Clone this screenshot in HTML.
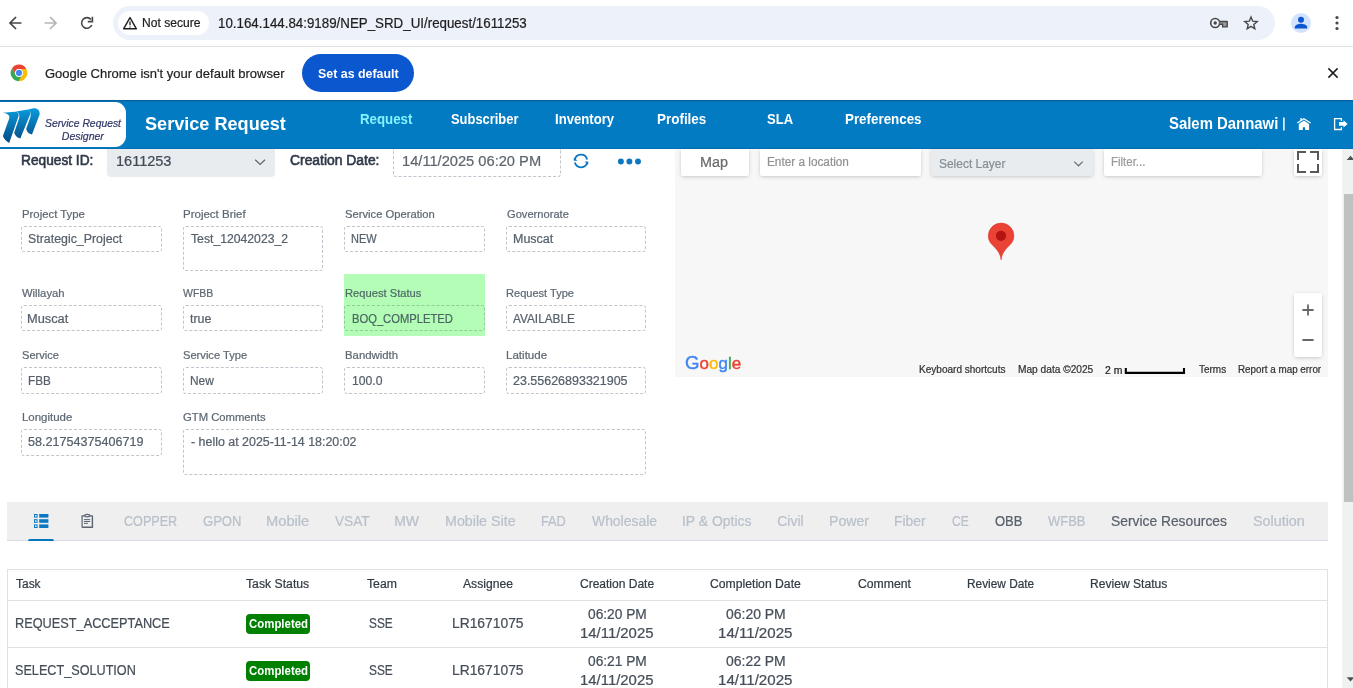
<!DOCTYPE html>
<html><head><meta charset="utf-8"><title>Service Request</title>
<style>
*{box-sizing:border-box;margin:0;padding:0}
html,body{width:1353px;height:688px;overflow:hidden;background:#fff;font-family:"Liberation Sans",sans-serif;color:#495057}
.a{position:absolute;white-space:pre;line-height:1;transform-origin:0 0}
svg{position:absolute;overflow:visible}
#sep1{left:0;top:46px;width:1353px;height:1px;background:#e0e3e1}
#pill{left:113px;top:6px;width:1162px;height:34px;border-radius:17px;background:#edf1fa}
#chip{left:118px;top:11px;width:91px;height:24px;border-radius:12px;background:#fff}
#sep2{left:0;top:99px;width:1353px;height:1px;background:#fcf9f6}
#setdef{left:302px;top:54px;width:112px;height:38px;border-radius:19px;background:#0b57d0}
#hdr{left:0;top:100px;width:1353px;height:49px;background:#027bc2;border-bottom:1px solid #026fb4;box-shadow:inset 0 1px 0 #0261a5,inset 0 2px 0 #0a71b1}
#logo{left:-12px;top:102px;width:138px;height:45px;background:#fff;border-radius:11px}
#reqsel{left:107px;top:149px;width:168px;height:28px;background:#e9ecef;border-radius:0 0 4px 4px}
.f{position:absolute;border:1px dashed #bfc5cd;border-radius:3px;width:141px;height:26px}
#green{left:344px;top:274px;width:141px;height:62px;background:#b3fdb7}
#map{left:675px;top:149px;width:653px;height:228px;background:#f7f7f7}
.mb{position:absolute;background:#fff;border-radius:0 0 2px 2px;box-shadow:0 1px 4px -1px rgba(0,0,0,.3)}
#sellayer{left:931px;top:149px;width:162px;height:27px;background:#e9ecef;border-radius:0 0 3px 3px;box-shadow:0 1px 4px -1px rgba(0,0,0,.3)}
#zoomc{left:1294px;top:293px;width:28px;height:64px;border-radius:2px}
#tabbar{left:7px;top:502px;width:1321px;height:39px;background:#efefef;border-bottom:1px solid #d6dde6}
#tabind{left:28px;top:539px;width:26px;height:2px;background:#0277bd;border-radius:2px 2px 0 0}
#tbl{left:7px;top:569px;width:1321px;height:130px;border:1px solid #dee2e6;border-bottom:0}
.hl{position:absolute;left:8px;width:1319px;height:1px;background:#dee2e6}
.badge{position:absolute;left:246px;width:64px;height:20px;border-radius:4px;background:#008000}
#sbtrack{left:1342px;top:149px;width:17px;height:539px;background:#f1f1f1}
#sbthumb{left:1344px;top:194px;width:13px;height:308px;background:#c1c1c1}
</style></head><body>
<!-- browser chrome -->
<div class="a" id="pill"></div>
<div class="a" id="chip"></div>
<div class="a" id="sep1"></div>
<svg style="left:0;top:0" width="1353" height="100" viewBox="0 0 1353 100">
 <!-- back -->
 <g fill="none" stroke="#474747" stroke-width="1.7" stroke-linecap="square" stroke-linejoin="miter">
  <path d="M20.6 23H10.6M15.4 17.6L10 23l5.4 5.4"/>
 </g>
 <!-- forward -->
 <g fill="none" stroke="#b5b5b5" stroke-width="1.7" stroke-linecap="square">
  <path d="M45.4 23H55.4M50.6 17.6L56 23l-5.4 5.4"/>
 </g>
 <!-- reload -->
 <g fill="none" stroke="#474747" stroke-width="1.6">
  <path d="M91 19.6A5.3 5.3 0 1 0 91.8 25"/>
  <path d="M92.4 16.8v4.8h-4.6" stroke-linejoin="miter"/>
 </g>
 <!-- warning triangle -->
 <path d="M130 17.6l6.4 11.2h-12.8z" fill="none" stroke="#1f1f1f" stroke-width="1.4" stroke-linejoin="round"/>
 <path d="M130 21.6v3.6M130 26.4v1.2" stroke="#1f1f1f" stroke-width="1.3"/>
 <!-- key -->
 <circle cx="1215.2" cy="23" r="4.5" fill="none" stroke="#474747" stroke-width="1.6"/>
 <path d="M1219.6 21.5h7.6v5.4h-4.6v-2.6h-3.4" fill="#9a9a9a" stroke="#474747" stroke-width="1.4" stroke-linejoin="round"/>
 <circle cx="1215.2" cy="23" r="1.7" fill="#474747"/>
 <!-- star -->
 <path d="M1251.0 17.0L1252.7 21.2L1257.2 21.5L1253.8 24.4L1254.8 28.8L1251.0 26.4L1247.2 28.8L1248.2 24.4L1244.8 21.5L1249.3 21.2z" fill="none" stroke="#474747" stroke-width="1.4" stroke-linejoin="miter"/>
 <!-- avatar -->
 <circle cx="1301" cy="23" r="10" fill="#d3e3fd"/>
 <circle cx="1301" cy="19.8" r="3" fill="#0b57d0"/>
 <path d="M1294.8 28.4v-1.3c0-2.3 4.1-3.4 6.2-3.4s6.2 1.1 6.2 3.4v1.3z" fill="#0b57d0"/>
 <!-- menu dots -->
 <circle cx="1337" cy="17.5" r="1.6" fill="#474747"/><circle cx="1337" cy="23" r="1.6" fill="#474747"/><circle cx="1337" cy="28.5" r="1.6" fill="#474747"/>
 <!-- chrome logo -->
 <g transform="translate(19 72.9)">
  <circle r="8.3" fill="#fff"/>
  <path d="M-3.38 1.95L-7.04 -4.40A8.3 8.3 0 0 1 7.33 -3.90L0.00 -3.90A3.9 3.9 0 0 0 -3.38 1.95z" fill="#ea4335"/>
  <path d="M0.00 -3.90L7.33 -3.90A8.3 8.3 0 0 1 -0.29 8.30L3.38 1.95A3.9 3.9 0 0 0 0.00 -3.90z" fill="#fbbc04"/>
  <path d="M3.38 1.95L-0.29 8.30A8.3 8.3 0 0 1 -7.04 -4.40L-3.38 1.95A3.9 3.9 0 0 0 3.38 1.95z" fill="#34a853"/>
  <circle r="3.9" fill="#fff"/><circle r="3.05" fill="#4285f4"/>
 </g>
 <!-- close x -->
 <path d="M1328.4 68.4l9.2 9.2M1337.6 68.4l-9.2 9.2" stroke="#1f1f1f" stroke-width="1.5"/>
</svg>
<div class="a" id="setdef"></div>
<div class="a" id="sep2"></div>
<!-- app header -->
<div class="a" id="hdr"></div>
<div class="a" id="logo"></div>
<svg style="left:0;top:100px" width="1353" height="49" viewBox="0 100 1353 49">
 <defs><linearGradient id="lg" gradientUnits="userSpaceOnUse" x1="0" y1="108" x2="0" y2="143"><stop offset="0" stop-color="#0a9bdb"/><stop offset="1" stop-color="#044a85"/></linearGradient></defs>
 <g fill="url(#lg)">
  <path d="M2.9 112.7L14.6 111.8C17.6 111.6 19.2 113.2 18.6 116.1L9.2 142.9Q4.6 140.6 2.9 136L9.2 118.4Q10.5 113.8 2.9 112.7z"/>
  <path d="M16 111.6L26.4 109.8C29.4 109.4 30.8 111.4 29.9 115.1L20.3 138.6Q15.7 137.3 14.2 132.7L19.2 118C19.8 114.6 19 112.6 16 111.6z"/>
  <path d="M27.8 109.5L33.6 108.2C37.6 108 40.2 110.6 39.6 114.4L32 134.4Q26.8 133.4 26.2 128.8L30.4 117C31 113 30.4 111 27.8 109.5z"/>
 </g>
 <!-- pipe -->
 <path d="M1283.9 117.4v13" stroke="#fff" stroke-width="1.5"/>
 <!-- home -->
 <path d="M1297.3 123L1303.9 118.7L1310.6 123" fill="none" stroke="#fff" stroke-width="1.1"/>
 <g fill="#fff">
  <path d="M1303.9 120.5L1309.1 123.9V130.1H1305.1V127.2H1302.8V130.1H1298.8V123.9z"/>
  <rect x="1300.4" y="118" width="1.4" height="2.6"/>
 </g>
 <!-- logout -->
 <path d="M1341.4 120.9V118.7H1334.6V129.5H1341.4V127.3" fill="none" stroke="#fff" stroke-width="1.3"/>
 <path d="M1339 122.1H1343.5V120.3L1347.7 124L1343.5 127.6V125.8H1339z" fill="#fff"/>
</svg>
<!-- form -->
<div class="a" id="reqsel"></div>
<svg style="left:0;top:149px" width="680" height="40" viewBox="0 149 680 40">
 <path d="M255.2 159.8l4.9 4.6 4.9-4.6" fill="none" stroke="#5b636b" stroke-width="1.2"/>
 <!-- refresh -->
 <g fill="none" stroke="#0a78c2" stroke-width="1.8">
  <path d="M574.8 159.9A6.3 6.3 0 0 1 587.1 159.4"/>
  <path d="M587.2 162.1A6.3 6.3 0 0 1 574.9 162.6"/>
 </g>
 <path d="M573.8 157.2v3.5h3.6z" fill="#0a78c2"/>
 <path d="M588.2 164.9v-3.5h-3.6z" fill="#0a78c2"/>
 <circle cx="620.9" cy="161.5" r="2.95" fill="#0a78c2"/><circle cx="629.4" cy="161.5" r="2.95" fill="#0a78c2"/><circle cx="638" cy="161.5" r="2.95" fill="#0a78c2"/>
</svg>
<div class="f" style="left:393px;top:149px;width:168px;height:28px;border-top:0;border-radius:0 0 3px 3px"></div>
<div class="a" id="green"></div>
<div class="f" style="left:21px;top:226px"></div><div class="f" style="left:183px;top:226px;width:140px;height:45px"></div><div class="f" style="left:344px;top:226px"></div><div class="f" style="left:506px;top:226px;width:140px"></div>
<div class="f" style="left:21px;top:305px"></div><div class="f" style="left:183px;top:305px;width:140px"></div><div class="f" style="left:344px;top:305px;border-color:#8fce93"></div><div class="f" style="left:506px;top:305px;width:140px"></div>
<div class="f" style="left:21px;top:367px;height:27px"></div><div class="f" style="left:183px;top:367px;width:140px;height:27px"></div><div class="f" style="left:344px;top:367px;height:27px"></div><div class="f" style="left:506px;top:367px;width:140px;height:27px"></div>
<div class="f" style="left:21px;top:429px;height:27px"></div><div class="f" style="left:183px;top:429px;width:463px;height:46px"></div>
<!-- map -->
<div class="a" id="map"></div>
<div class="mb" style="left:681px;top:149px;width:68px;height:27px"></div>
<div class="mb" style="left:760px;top:149px;width:161px;height:27px"></div>
<div class="a" id="sellayer"></div>
<div class="mb" style="left:1104px;top:149px;width:158px;height:27px"></div>
<div class="mb" style="left:1294px;top:149px;width:28px;height:27px"></div>
<div class="mb" id="zoomc"></div>
<svg style="left:675px;top:149px" width="653" height="228" viewBox="675 149 653 228">
 <path d="M1074.2 161.6l4.3 4.2 4.3-4.2" fill="none" stroke="#6a727a" stroke-width="1.2"/>
 <!-- fullscreen -->
 <g fill="none" stroke="#585858" stroke-width="2">
  <path d="M1298 160v-8h8M1310 152h8v8M1318 164v8h-8M1306 172h-8v-8"/>
 </g>
 <!-- zoom +/- -->
 <path d="M1302.4 310h11.2M1308 304.4v11.2M1302.4 340h11.2" stroke="#666" stroke-width="1.8"/>
 <!-- pin -->
 <path d="M1001.1 259.8C1000.4 252.6 996 248.6 992.2 244.8C989.8 242.4 988.3 239.4 988.3 235.9A12.8 12.8 0 0 1 1013.9 235.9C1013.9 239.4 1012.4 242.4 1010 244.8C1006.2 248.6 1001.8 252.6 1001.1 259.8z" fill="#ea4335" stroke="#d8392e" stroke-width=".6"/>
 <circle cx="1001" cy="235.8" r="5.1" fill="#b31412"/>
 <!-- scale bar -->
 <path d="M1125.8 368v4.9h58.2v-4.9" fill="none" stroke="#000" stroke-width="2.1"/>
</svg>
<!-- tabs -->
<div class="a" id="tabbar"></div>
<div class="a" id="tabind"></div>
<svg style="left:0;top:502px" width="140" height="39" viewBox="0 502 140 39">
 <g fill="#0a78c2">
  <rect x="34" y="514" width="3.6" height="3.6"/><rect x="39.2" y="514" width="9.2" height="3.6"/>
  <rect x="34" y="519.2" width="3.6" height="3.6"/><rect x="39.2" y="519.2" width="9.2" height="3.6"/>
  <rect x="34" y="524.4" width="3.6" height="3.6"/><rect x="39.2" y="524.4" width="9.2" height="3.6"/>
 </g>
 <g fill="#efefef"><rect x="35" y="515" width="1.6" height="1.6"/><rect x="35" y="520.2" width="1.6" height="1.6"/><rect x="35" y="525.4" width="1.6" height="1.6"/></g>
 <g fill="none" stroke="#5a6470" stroke-width="1.2">
  <path d="M84.6 515.9h-2.5v11.3h10.2v-11.3h-2.5" />
  <path d="M92.6 516.2v11.3h-10" stroke-width="1"/>
  <ellipse cx="87.2" cy="515.6" rx="2.6" ry="1.3"/>
  <path d="M84 519.6h6.2M84 521.5h6.2M84 523.4h3.9" stroke-width="1"/>
 </g>
</svg>
<!-- table -->
<div class="a" id="tbl"></div>
<div class="hl" style="top:600px"></div><div class="hl" style="top:647px"></div>
<div class="badge" style="top:614px"></div><div class="badge" style="top:661px"></div>
<!-- scrollbar -->
<div class="a" id="sbtrack"></div>
<div class="a" id="sbthumb"></div>
<svg style="left:1342px;top:149px" width="11" height="539" viewBox="1342 149 11 539">
 <path d="M1350.5 155.8l3.8 4.2h-7.6z" fill="#505050"/>
 <path d="M1350.5 681.4l3.8 -4.2h-7.6z" fill="#505050"/>
</svg>
<div id="tx" style="position:absolute;left:0;top:0;width:1353px;height:688px;will-change:transform;-webkit-text-stroke:.22px">
<span class="a" style="left:142.4px;top:17.0px;font-size:12px;color:#1f1f1f;transform:scaleX(1.008)">Not secure</span>
<span class="a" style="left:217.6px;top:16.0px;font-size:14px;color:#1f1f1f;transform:scaleX(0.952)">10.164.144.84:9189/NEP_SRD_UI/request/1611253</span>
<span class="a" style="left:45.3px;top:67.0px;font-size:13.5px;color:#1f1f1f;transform:scaleX(0.963)">Google Chrome isn&#x27;t your default browser</span>
<span class="a" style="left:317.6px;top:67.0px;font-size:13px;color:#ffffff;transform:scaleX(0.954);font-weight:700;-webkit-text-stroke:0">Set as default</span>
<span class="a" style="left:44.7px;top:118.0px;font-size:10.5px;color:#323868;transform:scaleX(0.986);font-style:italic">Service Request</span>
<span class="a" style="left:61.8px;top:131.0px;font-size:10.5px;color:#323868;transform:scaleX(1.000);font-style:italic">Designer</span>
<span class="a" style="left:144.9px;top:114.0px;font-size:19px;color:#ffffff;transform:scaleX(0.953);font-weight:700;-webkit-text-stroke:0">Service Request</span>
<span class="a" style="left:360.0px;top:111.0px;font-size:15px;color:#84f3ff;transform:scaleX(0.884);font-weight:700;-webkit-text-stroke:0">Request</span>
<span class="a" style="left:451.3px;top:111.0px;font-size:15px;color:#fff;transform:scaleX(0.861);font-weight:700;-webkit-text-stroke:0">Subscriber</span>
<span class="a" style="left:554.6px;top:111.0px;font-size:15px;color:#fff;transform:scaleX(0.876);font-weight:700;-webkit-text-stroke:0">Inventory</span>
<span class="a" style="left:657.2px;top:111.0px;font-size:15px;color:#fff;transform:scaleX(0.896);font-weight:700;-webkit-text-stroke:0">Profiles</span>
<span class="a" style="left:767.2px;top:111.0px;font-size:15px;color:#fff;transform:scaleX(0.868);font-weight:700;-webkit-text-stroke:0">SLA</span>
<span class="a" style="left:844.6px;top:111.0px;font-size:15px;color:#fff;transform:scaleX(0.891);font-weight:700;-webkit-text-stroke:0">Preferences</span>
<span class="a" style="left:1168.9px;top:116.0px;font-size:16px;color:#ffffff;transform:scaleX(0.931);font-weight:700;-webkit-text-stroke:0">Salem Dannawi</span>
<span class="a" style="left:21.0px;top:153.0px;font-size:14px;color:#2f3947;transform:scaleX(0.979);-webkit-text-stroke:0.6px">Request ID:</span>
<span class="a" style="left:115.8px;top:154.0px;font-size:14px;color:#414b57;transform:scaleX(1.037)">1611253</span>
<span class="a" style="left:289.8px;top:153.0px;font-size:14px;color:#2f3947;transform:scaleX(0.991);-webkit-text-stroke:0.6px">Creation Date:</span>
<span class="a" style="left:401.6px;top:154.0px;font-size:14px;color:#5f666e;transform:scaleX(1.047)">14/11/2025 06:20 PM</span>
<span class="a" style="left:21.9px;top:209.0px;font-size:11px;color:#5e6873;transform:scaleX(1.032)">Project Type</span>
<span class="a" style="left:183.4px;top:209.0px;font-size:11px;color:#5e6873;transform:scaleX(1.045)">Project Brief</span>
<span class="a" style="left:344.7px;top:209.0px;font-size:11px;color:#5e6873;transform:scaleX(1.019)">Service Operation</span>
<span class="a" style="left:506.5px;top:209.0px;font-size:11px;color:#5e6873;transform:scaleX(1.012)">Governorate</span>
<span class="a" style="left:22.0px;top:288.0px;font-size:11px;color:#5e6873;transform:scaleX(1.023)">Willayah</span>
<span class="a" style="left:183.4px;top:288.0px;font-size:11px;color:#5e6873;transform:scaleX(0.952)">WFBB</span>
<span class="a" style="left:345.2px;top:288.0px;font-size:11px;color:#4f6a66;transform:scaleX(1.015)">Request Status</span>
<span class="a" style="left:506.3px;top:288.0px;font-size:11px;color:#5e6873;transform:scaleX(1.005)">Request Type</span>
<span class="a" style="left:21.8px;top:350.0px;font-size:11px;color:#5e6873;transform:scaleX(1.009)">Service</span>
<span class="a" style="left:183.2px;top:350.0px;font-size:11px;color:#5e6873;transform:scaleX(1.012)">Service Type</span>
<span class="a" style="left:345.2px;top:350.0px;font-size:11px;color:#5e6873;transform:scaleX(1.032)">Bandwidth</span>
<span class="a" style="left:506.3px;top:350.0px;font-size:11px;color:#5e6873;transform:scaleX(1.052)">Latitude</span>
<span class="a" style="left:21.7px;top:412.0px;font-size:11px;color:#5e6873;transform:scaleX(1.041)">Longitude</span>
<span class="a" style="left:183.2px;top:412.0px;font-size:11px;color:#5e6873;transform:scaleX(1.023)">GTM Comments</span>
<span class="a" style="left:28.0px;top:233.0px;font-size:12px;color:#56606b;transform:scaleX(1.031)">Strategic_Project</span>
<span class="a" style="left:191.4px;top:233.0px;font-size:12px;color:#56606b;transform:scaleX(1.017)">Test_12042023_2</span>
<span class="a" style="left:351.4px;top:233.0px;font-size:12px;color:#56606b;transform:scaleX(0.917)">NEW</span>
<span class="a" style="left:513.2px;top:233.0px;font-size:12px;color:#56606b;transform:scaleX(1.040)">Muscat</span>
<span class="a" style="left:27.3px;top:313.0px;font-size:12px;color:#56606b;transform:scaleX(1.067)">Muscat</span>
<span class="a" style="left:190.1px;top:313.0px;font-size:12px;color:#56606b;transform:scaleX(1.037)">true</span>
<span class="a" style="left:351.7px;top:313.0px;font-size:12px;color:#4c6561;transform:scaleX(0.933)">BOQ_COMPLETED</span>
<span class="a" style="left:513.4px;top:313.0px;font-size:12px;color:#56606b;transform:scaleX(0.984)">AVAILABLE</span>
<span class="a" style="left:28.0px;top:375.0px;font-size:12px;color:#56606b;transform:scaleX(0.977)">FBB</span>
<span class="a" style="left:189.8px;top:375.0px;font-size:12px;color:#56606b;transform:scaleX(0.991)">New</span>
<span class="a" style="left:351.7px;top:375.0px;font-size:12px;color:#56606b;transform:scaleX(1.017)">100.0</span>
<span class="a" style="left:513.2px;top:375.0px;font-size:12px;color:#56606b;transform:scaleX(1.040)">23.55626893321905</span>
<span class="a" style="left:28.1px;top:436.0px;font-size:12px;color:#56606b;transform:scaleX(1.049)">58.21754375406719</span>
<span class="a" style="left:191.3px;top:436.0px;font-size:12px;color:#56606b;transform:scaleX(1.035)">- hello at 2025-11-14 18:20:02</span>
<span class="a" style="left:699.8px;top:155.0px;font-size:14px;color:#6a6a6a;transform:scaleX(1.025)">Map</span>
<span class="a" style="left:767.1px;top:156.0px;font-size:12px;color:#929292;transform:scaleX(0.982)">Enter a location</span>
<span class="a" style="left:939.2px;top:157.0px;font-size:13px;color:#868e96;transform:scaleX(0.919)">Select Layer</span>
<span class="a" style="left:1110.6px;top:156.0px;font-size:12px;color:#9a9a9a;transform:scaleX(0.955)">Filter...</span>
<span class="a" style="left:685.3px;top:354.0px;font-size:18px;color:#4285f4;transform:scaleX(1.036)"><span style="-webkit-text-stroke:.45px;text-shadow:0 0 2px #fff,0 0 1px #fff">G<span style="font-size:16.4px"><span style="color:#ea4335">o</span><span style="color:#fbbc05">o</span>g<span style="color:#34a853">l</span><span style="color:#ea4335">e</span></span></span></span>
<span class="a" style="left:919.3px;top:365.0px;font-size:10px;color:#333;transform:scaleX(1.004)">Keyboard shortcuts</span>
<span class="a" style="left:1017.9px;top:365.0px;font-size:10px;color:#333;transform:scaleX(1.016)">Map data ©2025</span>
<span class="a" style="left:1104.9px;top:366.0px;font-size:10px;color:#222;transform:scaleX(1.041)">2 m</span>
<span class="a" style="left:1198.6px;top:365.0px;font-size:10px;color:#333;transform:scaleX(0.997)">Terms</span>
<span class="a" style="left:1238.4px;top:365.0px;font-size:10px;color:#333;transform:scaleX(0.984)">Report a map error</span>
<span class="a" style="left:124.1px;top:514.0px;font-size:14px;color:#b9c0ca;transform:scaleX(0.900)">COPPER</span>
<span class="a" style="left:202.7px;top:514.0px;font-size:14px;color:#b9c0ca;transform:scaleX(0.932)">GPON</span>
<span class="a" style="left:265.8px;top:514.0px;font-size:14px;color:#b9c0ca;transform:scaleX(1.048)">Mobile</span>
<span class="a" style="left:334.5px;top:514.0px;font-size:14px;color:#b9c0ca;transform:scaleX(0.972)">VSAT</span>
<span class="a" style="left:394.2px;top:514.0px;font-size:14px;color:#b9c0ca;transform:scaleX(1.000)">MW</span>
<span class="a" style="left:444.8px;top:514.0px;font-size:14px;color:#b9c0ca;transform:scaleX(1.019)">Mobile Site</span>
<span class="a" style="left:540.6px;top:514.0px;font-size:14px;color:#b9c0ca;transform:scaleX(0.911)">FAD</span>
<span class="a" style="left:591.9px;top:514.0px;font-size:14px;color:#b9c0ca;transform:scaleX(0.994)">Wholesale</span>
<span class="a" style="left:681.7px;top:514.0px;font-size:14px;color:#b9c0ca;transform:scaleX(0.996)">IP &amp; Optics</span>
<span class="a" style="left:777.2px;top:514.0px;font-size:14px;color:#b9c0ca;transform:scaleX(1.000)">Civil</span>
<span class="a" style="left:828.8px;top:514.0px;font-size:14px;color:#b9c0ca;transform:scaleX(1.010)">Power</span>
<span class="a" style="left:894.3px;top:514.0px;font-size:14px;color:#b9c0ca;transform:scaleX(0.988)">Fiber</span>
<span class="a" style="left:952.3px;top:514.0px;font-size:14px;color:#b9c0ca;transform:scaleX(0.857)">CE</span>
<span class="a" style="left:994.9px;top:514.0px;font-size:14px;color:#59616b;transform:scaleX(0.929)">OBB</span>
<span class="a" style="left:1047.9px;top:514.0px;font-size:14px;color:#b9c0ca;transform:scaleX(0.926)">WFBB</span>
<span class="a" style="left:1111.0px;top:514.0px;font-size:14px;color:#59616b;transform:scaleX(0.987)">Service Resources</span>
<span class="a" style="left:1252.8px;top:514.0px;font-size:14px;color:#b9c0ca;transform:scaleX(1.024)">Solution</span>
<span class="a" style="left:15.5px;top:578.0px;font-size:12px;color:#323b45;transform:scaleX(0.997)">Task</span>
<span class="a" style="left:246.2px;top:578.0px;font-size:12px;color:#323b45;transform:scaleX(1.019)">Task Status</span>
<span class="a" style="left:366.8px;top:578.0px;font-size:12px;color:#323b45;transform:scaleX(1.020)">Team</span>
<span class="a" style="left:463.1px;top:578.0px;font-size:12px;color:#323b45;transform:scaleX(1.013)">Assignee</span>
<span class="a" style="left:579.8px;top:578.0px;font-size:12px;color:#323b45;transform:scaleX(1.001)">Creation Date</span>
<span class="a" style="left:710.4px;top:578.0px;font-size:12px;color:#323b45;transform:scaleX(1.016)">Completion Date</span>
<span class="a" style="left:857.7px;top:578.0px;font-size:12px;color:#323b45;transform:scaleX(1.018)">Comment</span>
<span class="a" style="left:967.1px;top:578.0px;font-size:12px;color:#323b45;transform:scaleX(0.988)">Review Date</span>
<span class="a" style="left:1089.8px;top:578.0px;font-size:12px;color:#323b45;transform:scaleX(1.008)">Review Status</span>
<span class="a" style="left:14.5px;top:616.0px;font-size:14px;color:#454e58;transform:scaleX(0.910)">REQUEST_ACCEPTANCE</span>
<span class="a" style="left:248.7px;top:618.0px;font-size:12px;color:#ffffff;transform:scaleX(0.952);font-weight:700;-webkit-text-stroke:0">Completed</span>
<span class="a" style="left:369.2px;top:616.0px;font-size:14px;color:#454e58;transform:scaleX(0.846)">SSE</span>
<span class="a" style="left:452.0px;top:616.0px;font-size:14px;color:#454e58;transform:scaleX(0.988)">LR1671075</span>
<span class="a" style="left:587.9px;top:607.0px;font-size:14px;color:#454e58;transform:scaleX(0.981)">06:20 PM</span>
<span class="a" style="left:580.2px;top:626.0px;font-size:14px;color:#454e58;transform:scaleX(1.064)">14/11/2025</span>
<span class="a" style="left:726.2px;top:607.0px;font-size:14px;color:#454e58;transform:scaleX(0.997)">06:20 PM</span>
<span class="a" style="left:718.4px;top:626.0px;font-size:14px;color:#454e58;transform:scaleX(1.078)">14/11/2025</span>
<span class="a" style="left:15.2px;top:663.0px;font-size:14px;color:#454e58;transform:scaleX(0.903)">SELECT_SOLUTION</span>
<span class="a" style="left:248.7px;top:665.0px;font-size:12px;color:#ffffff;transform:scaleX(0.952);font-weight:700;-webkit-text-stroke:0">Completed</span>
<span class="a" style="left:369.2px;top:663.0px;font-size:14px;color:#454e58;transform:scaleX(0.846)">SSE</span>
<span class="a" style="left:452.0px;top:663.0px;font-size:14px;color:#454e58;transform:scaleX(0.988)">LR1671075</span>
<span class="a" style="left:587.9px;top:654.0px;font-size:14px;color:#454e58;transform:scaleX(0.981)">06:21 PM</span>
<span class="a" style="left:580.2px;top:673.0px;font-size:14px;color:#454e58;transform:scaleX(1.064)">14/11/2025</span>
<span class="a" style="left:726.2px;top:654.0px;font-size:14px;color:#454e58;transform:scaleX(0.997)">06:22 PM</span>
<span class="a" style="left:718.4px;top:673.0px;font-size:14px;color:#454e58;transform:scaleX(1.078)">14/11/2025</span>
</div>
</body></html>
